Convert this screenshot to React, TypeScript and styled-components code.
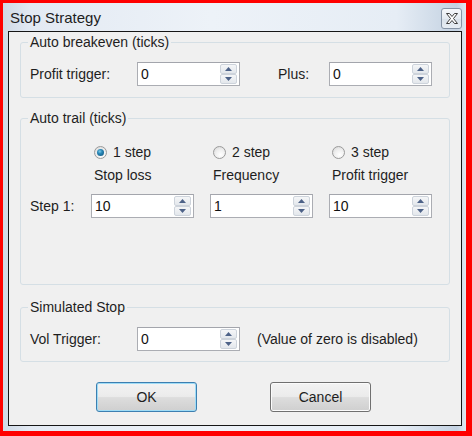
import React from 'react';
import styled, { createGlobalStyle } from 'styled-components';

const Global = createGlobalStyle`
  html, body { margin: 0; padding: 0; background: #ffffff; }
  body { font-family: "Liberation Sans", Arial, sans-serif; }
  * { box-sizing: border-box; }
`;

const Screen = styled.div`
  width: 472px;
  height: 436px;
  border-style: solid;
  border-color: #f00;
  border-width: 3px 6px 5px 3px;
  display: flex;
`;

const Win = styled.div`
  flex: 1;
  display: flex;
  flex-direction: column;
  padding: 0 4px 5px 5px;
  background: linear-gradient(to right, #cfd9e5 0%, #e3eaf3 6%, #edf2f8 45%, #e6edf5 85%, #c4d2e2 98%, #dfe7f0 100%);
`;

const TitleBar = styled.div`
  height: 28px;
  display: flex;
  align-items: flex-start;
  justify-content: space-between;
`;

const Title = styled.div`
  margin: 6px 0 0 2px;
  font-size: 15px;
  line-height: 18px;
  color: #1e1e1e;
`;

const CloseBtn = styled.div`
  margin-top: 5px;
  width: 21px;
  height: 21px;
  border: 1px solid #8593a5;
  border-radius: 3px;
  background: linear-gradient(#f6f8fb, #e4eaf1 50%, #d9e1ea 51%, #e7edf3);
  display: flex;
  align-items: center;
  justify-content: center;
`;

const Client = styled.div`
  flex: 1;
  border: 1px solid #161616;
  background: #f0f0f0;
  padding: 2px 11px 0 11px;
  display: flex;
  flex-direction: column;
  color: #1e1e1e;
  font-size: 14px;
`;

const Group = styled.fieldset<{ $pt: number; $pb: number; $mt: number }>`
  margin: ${(p) => p.$mt}px 0 0 0;
  min-width: 0;
  border: 1px solid #d5dfe5;
  border-radius: 3px;
  padding: ${(p) => p.$pt}px 9px ${(p) => p.$pb}px 9px;
`;

const Legend = styled.legend`
  padding: 0 2px;
  margin-left: -2px;
  line-height: 16px;
  font-size: 14px;
  color: #1e1e1e;
`;

const Row = styled.div<{ $mt?: number }>`
  display: flex;
  align-items: center;
  margin-top: ${(p) => p.$mt ?? 0}px;
`;

const Label = styled.span<{ $w: number; $ml?: number }>`
  width: ${(p) => p.$w}px;
  margin-left: ${(p) => p.$ml ?? 0}px;
  line-height: 16px;
  flex-shrink: 0;
  white-space: nowrap;
`;

const Note = styled.span`
  margin-left: 17px;
  line-height: 16px;
  white-space: nowrap;
`;

const Grid = styled.div<{ $mt: number }>`
  display: flex;
  gap: 16px;
  align-items: center;
  margin-top: ${(p) => p.$mt}px;
`;

const Cell = styled.div`
  width: 103px;
  display: flex;
  align-items: center;
  line-height: 16px;
`;

const ColCaption = styled.span`
  padding-left: 3px;
  white-space: nowrap;
`;

const Box = styled.div`
  width: 103px;
  height: 24px;
  flex-shrink: 0;
  background: #fff;
  border: 1px solid #abadb3;
  border-top-color: #a3a5ac;
  display: flex;
  align-items: center;
  padding: 0 2px 0 3px;
`;

const BoxText = styled.span`
  flex: 1;
  line-height: 16px;
  color: #111;
`;

const Spin = styled.div`
  width: 17px;
  height: 20px;
  display: flex;
  flex-direction: column;
`;

const SpinBtn = styled.div`
  flex: 1;
  border: 1px solid #cdd3db;
  border-radius: 2px;
  background: linear-gradient(#f5f6f8, #e3e7ec);
  display: flex;
  align-items: center;
  justify-content: center;
`;

const RadioWrap = styled.div`
  display: flex;
  align-items: center;
  margin-left: 3px;
  gap: 6px;
  white-space: nowrap;
`;

const RadioCircle = styled.span<{ $on?: boolean }>`
  width: 13px;
  height: 13px;
  border-radius: 50%;
  border: 1px solid #9a9a9a;
  background: radial-gradient(circle at 60% 70%, #ffffff 0%, #eeeeee 50%, #d4d4d4 100%);
  display: flex;
  align-items: center;
  justify-content: center;
  &::after {
    content: '';
    display: ${(p) => (p.$on ? 'block' : 'none')};
    width: 7px;
    height: 7px;
    border-radius: 50%;
    background: radial-gradient(circle at 40% 35%, #7ecbe8 0%, #2a88b8 35%, #0d4f78 100%);
  }
`;

const Buttons = styled.div`
  display: flex;
  gap: 73px;
  margin: 20px 0 0 76px;
`;

const Btn = styled.div<{ $focus?: boolean }>`
  width: 101px;
  height: 30px;
  border-radius: 3px;
  border: 1px solid ${(p) => (p.$focus ? '#3c7fb1' : '#707070')};
  box-shadow: ${(p) => (p.$focus ? 'inset 0 0 0 1px #9fdcf6' : 'inset 0 0 0 1px #fbfbfb')};
  background: linear-gradient(#f3f3f3 0%, #ebebeb 48%, #dddddd 52%, #cfcfcf 100%);
  display: flex;
  align-items: center;
  justify-content: center;
  font-size: 14px;
  color: #1e1e1e;
`;

const Arrow = ({ up }: { up?: boolean }) => (
  <svg width="7" height="4" viewBox="0 0 7 4">
    <path d={up ? 'M0 4 L3.5 0 L7 4 Z' : 'M0 0 L3.5 4 L7 0 Z'} fill="#4d6288" />
  </svg>
);

const Spinner = ({ value }: { value: string }) => (
  <Box>
    <BoxText>{value}</BoxText>
    <Spin>
      <SpinBtn>
        <Arrow up />
      </SpinBtn>
      <SpinBtn>
        <Arrow />
      </SpinBtn>
    </Spin>
  </Box>
);

const Radio = ({ on, label }: { on?: boolean; label: string }) => (
  <RadioWrap>
    <RadioCircle $on={on} />
    <span>{label}</span>
  </RadioWrap>
);

export default function App() {
  return (
    <>
      <Global />
      <Screen>
        <Win>
          <TitleBar>
            <Title>Stop Strategy</Title>
            <CloseBtn>
              <svg width="12" height="11" viewBox="-0.5 -0.5 12 11">
                <polygon
                  points="0,0 3,0 5.5,3 8,0 11,0 7,5 11,10 8,10 5.5,7 3,10 0,10 4,5"
                  fill="#ffffff"
                  stroke="#3d3d3d"
                  strokeWidth="1"
                  strokeLinejoin="round"
                />
              </svg>
            </CloseBtn>
          </TitleBar>
          <Client>
            <Group $mt={0} $pt={12} $pb={11}>
              <Legend>Auto breakeven (ticks)</Legend>
              <Row>
                <Label $w={107}>Profit trigger:</Label>
                <Spinner value="0" />
                <Label $w={51} $ml={38}>Plus:</Label>
                <Spinner value="0" />
              </Row>
            </Group>
            <Group $mt={12} $pt={18} $pb={66}>
              <Legend>Auto trail (ticks)</Legend>
              <Grid $mt={0}>
                <Label $w={45} />
                <Cell><Radio on label="1 step" /></Cell>
                <Cell><Radio label="2 step" /></Cell>
                <Cell><Radio label="3 step" /></Cell>
              </Grid>
              <Grid $mt={7}>
                <Label $w={45} />
                <Cell><ColCaption>Stop loss</ColCaption></Cell>
                <Cell><ColCaption>Frequency</ColCaption></Cell>
                <Cell><ColCaption>Profit trigger</ColCaption></Cell>
              </Grid>
              <Grid $mt={11}>
                <Label $w={45}>Step 1:</Label>
                <Spinner value="10" />
                <Spinner value="1" />
                <Spinner value="10" />
              </Grid>
            </Group>
            <Group $mt={14} $pt={12} $pb={10}>
              <Legend>Simulated Stop</Legend>
              <Row>
                <Label $w={107}>Vol Trigger:</Label>
                <Spinner value="0" />
                <Note>(Value of zero is disabled)</Note>
              </Row>
            </Group>
            <Buttons>
              <Btn $focus>OK</Btn>
              <Btn>Cancel</Btn>
            </Buttons>
          </Client>
        </Win>
      </Screen>
    </>
  );
}
